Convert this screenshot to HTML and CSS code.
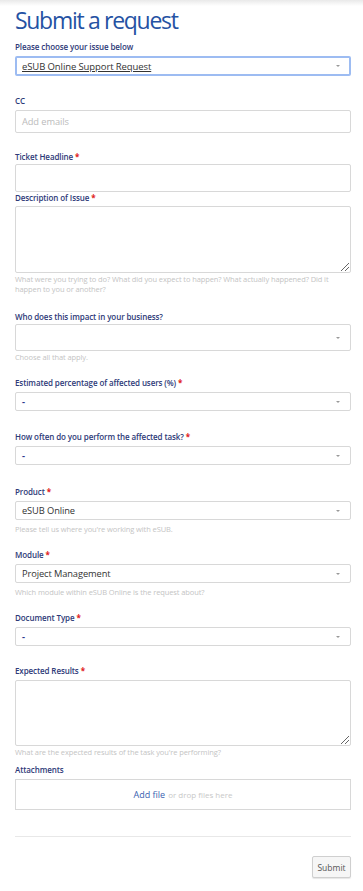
FILE: index.html
```html
<!DOCTYPE html>
<html lang="en">
<head>
    <meta charset="UTF-8">
    <meta name="viewport" content="width=device-width, initial-scale=1.0">
    <title>Submit a request</title>
    <link rel="stylesheet" href="styles.css">
</head>
<body>
    <div class="page">
        <h1>Submit a request</h1>

        <div class="field first">
            <label>Please choose your issue below</label>
            <div class="select focus"><span class="link">eSUB Online Support Request</span><span class="caret"></span></div>
        </div>

        <div class="field">
            <label>CC</label>
            <div class="input"><span class="placeholder">Add emails</span></div>
        </div>

        <div class="field headline">
            <label class="close">Ticket Headline<b>*</b></label>
            <div class="input tall"></div>
        </div>

        <div class="field tight">
            <label class="near">Description of Issue<b>*</b></label>
            <div class="textarea"><span class="grip"></span></div>
            <p class="hint">What were you trying to do? What did you expect to happen? What actually happened? Did it happen to you or another?</p>
        </div>

        <div class="field after-text">
            <label class="close">Who does this impact in your business?</label>
            <div class="select multi"><span></span><span class="caret"></span></div>
            <p class="hint">Choose all that apply.</p>
        </div>

        <div class="field after-hint">
            <label>Estimated percentage of affected users (%)<b>*</b></label>
            <div class="select"><span class="dash">-</span><span class="caret"></span></div>
        </div>

        <div class="field wide">
            <label>How often do you perform the affected task?<b>*</b></label>
            <div class="select"><span class="dash">-</span><span class="caret"></span></div>
        </div>

        <div class="field wider">
            <label>Product<b>*</b></label>
            <div class="select"><span>eSUB Online</span><span class="caret"></span></div>
            <p class="hint loose">Please tell us where you're working with eSUB.</p>
        </div>

        <div class="field after-hint">
            <label>Module<b>*</b></label>
            <div class="select"><span>Project Management</span><span class="caret"></span></div>
            <p class="hint loose">Which module within eSUB Online is the request about?</p>
        </div>

        <div class="field after-hint">
            <label>Document Type<b>*</b></label>
            <div class="select"><span class="dash">-</span><span class="caret"></span></div>
        </div>

        <div class="field">
            <label>Expected Results<b>*</b></label>
            <div class="textarea short"><span class="grip"></span></div>
            <p class="hint">What are the expected results of the task you're performing?</p>
        </div>

        <div class="field attach">
            <label>Attachments</label>
            <div class="dropzone"><span class="addfile">Add file</span> or drop files here</div>
        </div>

        <hr>

        <div class="actions">
            <button>Submit</button>
        </div>
    </div>
</body>
</html>
```

FILE: styles.css
```css
body{
    margin: 0;
    background: #fff linear-gradient(#e9e9e9, #fff 6px) no-repeat;
    font-family: "Open Sans", "Noto Sans", sans-serif;
    color: #333;
}
.page{
    padding: 5px 12px 10px 15px;
}
h1{
    margin: 0;
    font-size: 23px;
    font-weight: 400;
    line-height: 30px;
    color: #2552a3;
    letter-spacing: -1.3px;
}
.field{
    display: flex;
    flex-direction: column;
    margin-top: 19px;
}
.field.first{
    margin-top: 6px;
}
.field.headline{
    margin-top: 18px;
}
.field.tight{
    margin-top: 0;
}
.field.after-text{
    margin-top: 17px;
}
.field.after-hint{
    margin-top: 15px;
}
.field.wide{
    margin-top: 20px;
}
.field.wider{
    margin-top: 21px;
}
.field.attach{
    margin-top: 7px;
}
label{
    font-size: 8px;
    line-height: 12px;
    font-weight: 600;
    letter-spacing: -0.1px;
    color: #2e3a78;
    margin-bottom: 3px;
}
label.close{
    margin-bottom: 1px;
}
label.near{
    margin-bottom: 2px;
}
label b{
    color: #e02020;
    margin-left: 2px;
    font-weight: 700;
}
.select, .input{
    box-sizing: border-box;
    display: flex;
    align-items: center;
    justify-content: space-between;
    border: 1px solid #d8d8d8;
    border-radius: 2px;
    height: 19px;
    padding: 0 6px;
    font-size: 9.3px;
    letter-spacing: -0.1px;
    color: #333;
}
.select.focus{
    border: 2px solid #9dbcf2;
    height: 20px;
    padding: 0 5px;
}
.select.multi{
    height: 27px;
}
.input{
    height: 23px;
}
.input.tall{
    height: 28px;
}
.link{
    text-decoration: underline;
    font-size: 9.5px;
}
.placeholder{
    color: #bbb;
}
.dash{
    color: #2b3a8c;
    font-weight: 700;
}
.caret{
    width: 0;
    height: 0;
    border-left: 2px solid transparent;
    border-right: 2px solid transparent;
    border-top: 2px solid #999;
    margin-right: 4px;
}
.textarea{
    position: relative;
    box-sizing: border-box;
    border: 1px solid #d8d8d8;
    border-radius: 2px;
    height: 67px;
}
.textarea.short{
    height: 66px;
}
.grip{
    position: absolute;
    right: 1px;
    bottom: 1px;
    width: 8px;
    height: 8px;
    background: linear-gradient(135deg, transparent 45%, #666 45%, #666 52%, transparent 52%, transparent 70%, #666 70%, #666 77%, transparent 77%);
}
.hint{
    margin: 1px 0 0;
    font-size: 7.5px;
    line-height: 10px;
    letter-spacing: -0.1px;
    color: #c4c4c4;
}
.hint.loose{
    margin-top: 4px;
}
.dropzone{
    box-sizing: border-box;
    border: 1px solid #d8d8d8;
    height: 31px;
    display: flex;
    align-items: center;
    justify-content: center;
    font-size: 8px;
    color: #c8c8c8;
    gap: 3px;
}
.addfile{
    color: #3a5fb0;
    font-size: 9px;
}
hr{
    border: 0;
    border-top: 1px solid #e8e8e8;
    margin: 26px 0 19px;
}
.actions{
    display: flex;
    justify-content: flex-end;
}
button{
    font-family: inherit;
    font-size: 8.5px;
    color: #555;
    background: #f6f6f6;
    border: 1px solid #cfcfcf;
    border-radius: 2px;
    height: 22px;
    width: 39px;
    padding: 0;
    box-shadow: 0 1px 1px rgba(0,0,0,0.1);
}
```
